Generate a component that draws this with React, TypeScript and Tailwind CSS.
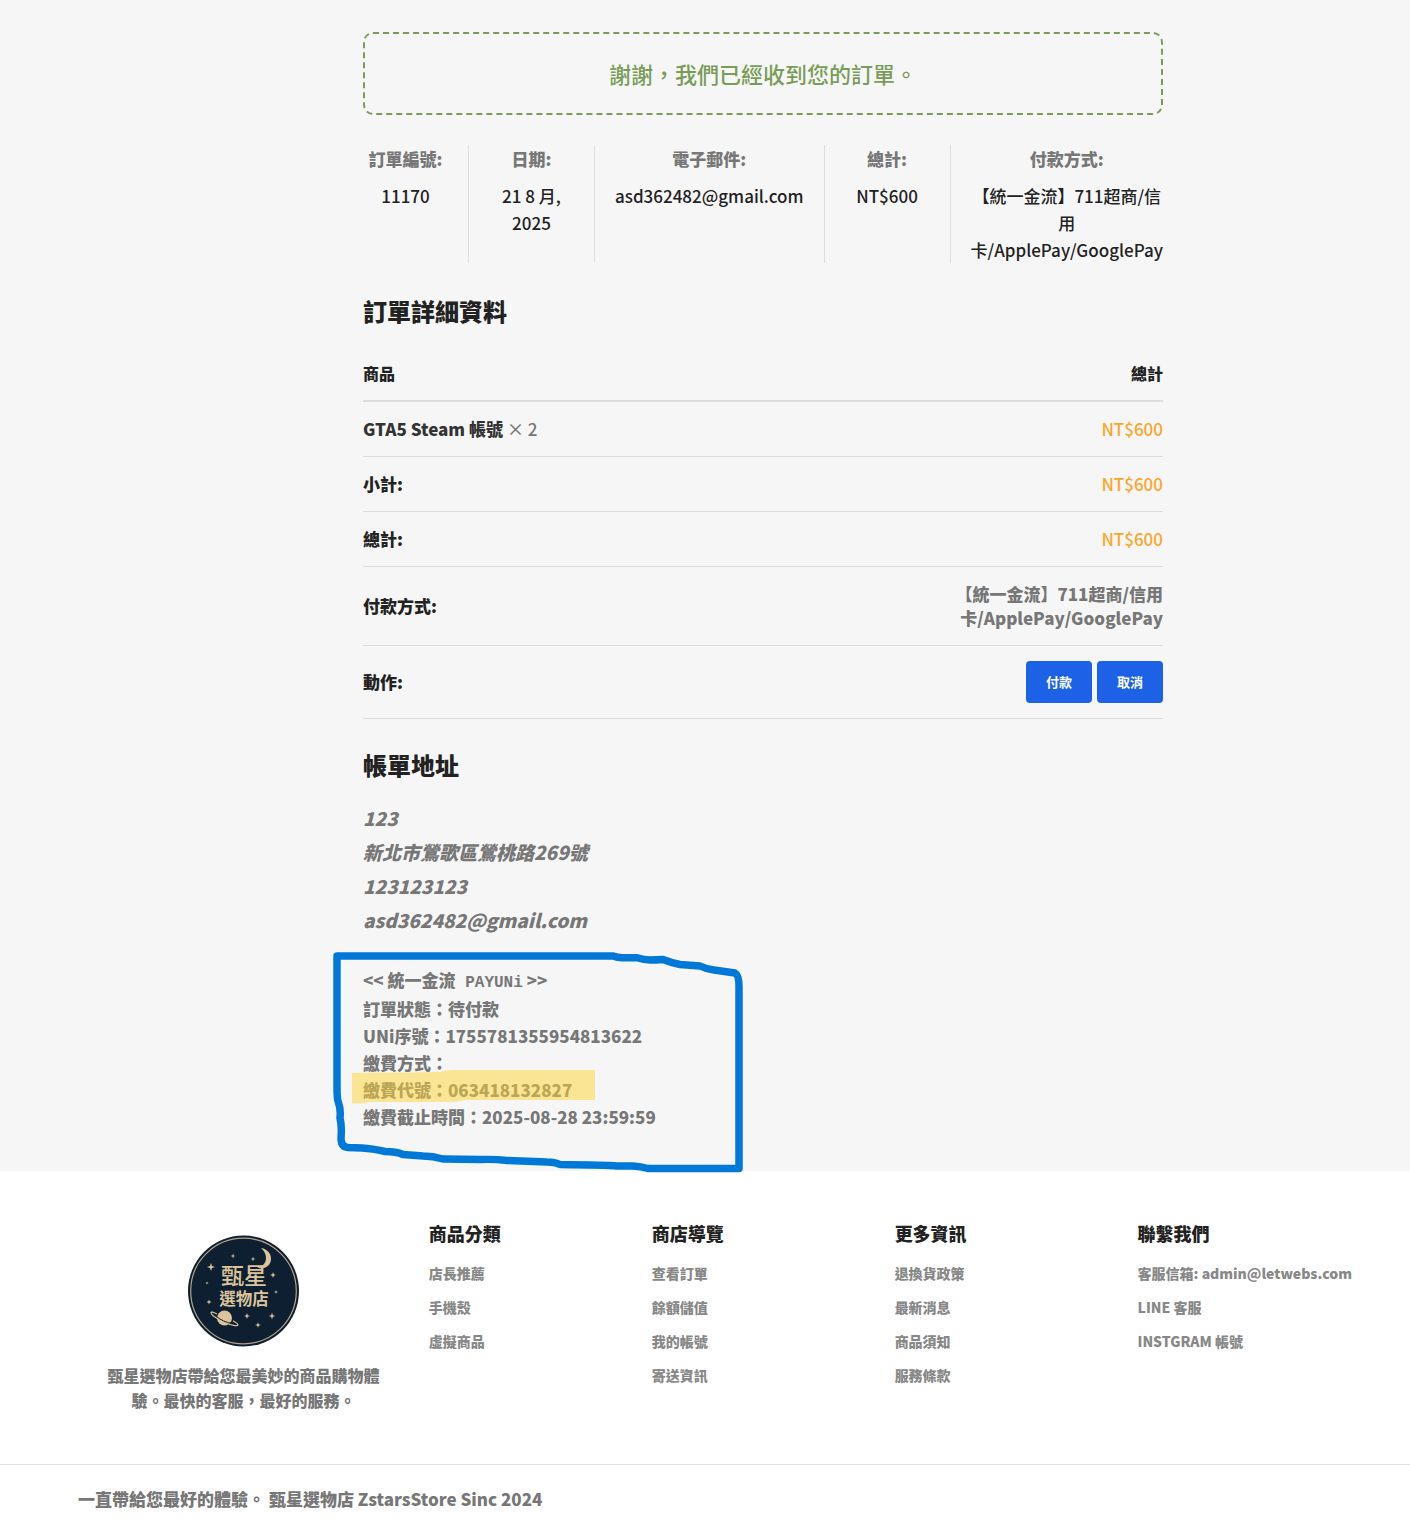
const overview = [
  { label: '訂單編號:', value: '11170' },
  { label: '日期:', value: '21 8 月, 2025' },
  { label: '電子郵件:', value: 'asd362482@gmail.com' },
  { label: '總計:', value: 'NT$600' },
  { label: '付款方式:', value: '【統一金流】711超商/信用卡/ApplePay/GooglePay' },
];

const footerColumns = [
  { title: '商品分類', links: ['店長推薦', '手機殼', '虛擬商品'] },
  { title: '商店導覽', links: ['查看訂單', '餘額儲值', '我的帳號', '寄送資訊'] },
  { title: '更多資訊', links: ['退換貨政策', '最新消息', '商品須知', '服務條款'] },
  { title: '聯繫我們', links: ['客服信箱: admin@letwebs.com', 'LINE 客服', 'INSTGRAM 帳號'] },
];

// four-point sparkles around the logo lettering: x, y, radius
const sparkles = [
  [31, 41, 4],
  [53, 30, 2.4],
  [73, 33, 2.4],
  [93, 49, 3],
  [27, 57, 1.6],
  [96, 66, 2],
  [29, 76, 2.6],
  [67, 90, 3],
  [92, 90, 3.4],
  [78, 99, 2.8],
];

function Logo() {
  return (
    <svg viewBox="7 9 112 112" className="block size-[112px]" role="img" aria-label="甄星選物店">
      <circle cx="63.5" cy="65" r="55.5" fill="#0d1f30" />
      <circle cx="63.5" cy="65" r="52.8" fill="none" stroke="#b5a283" strokeWidth="1.2" />
      <g fill="#dcc39c">
        <path d="M81 22c6.500 1 10.500 6 10 11.500-.5 5.500-4.900 9-10.500 8.800-1.500 0-2.500-.3-3.500-.8 5.500-.5 8.800-4.500 9-9 .2-4-1.800-8-5-10.500z" />
        {sparkles.map(([x, y, r]) => (
          <path
            key={`${x}-${y}`}
            d={`M${x} ${y - r}L${x + r / 4} ${y - r / 4}L${x + r} ${y}L${x + r / 4} ${y + r / 4}L${x} ${y + r}L${x - r / 4} ${y + r / 4}L${x - r} ${y}L${x - r / 4} ${y - r / 4}Z`}
          />
        ))}
        <circle cx="44.5" cy="92" r="7.500" />
      </g>
      <path d="M37 88c-4-2-6-2.500-6-1.300 0 2 6 6 13 9.300s14 4.600 14 2.800c0-.9-2-2.300-5-4" fill="none" stroke="#dcc39c" strokeWidth="1.200" />
      <path d="M36.500 90.500c4 3.500 10 6 15 7" fill="none" stroke="#0d1f30" strokeWidth="1" />
      <text x="64" y="58" textAnchor="middle" fontSize="23" fontWeight="500" fill="#dcc39c">甄星</text>
      <text x="64" y="79" textAnchor="middle" fontSize="16.500" fontWeight="700" fill="#dcc39c">選物店</text>
    </svg>
  );
}

function Annotation() {
  return (
    <svg
      viewBox="333 950 412 225"
      className="absolute -top-4 -left-[30px] w-[412px] h-[225px] max-w-none pointer-events-none"
      aria-hidden="true"
    >
      <path
        d="M352 1073L440 1072Q445 1070 455 1070H595V1100H464Q458 1102 445 1102L368 1102Q366 1103.500 352 1103.500Z"
        fill="#fed336"
        fillOpacity="0.510"
      />
      <path
        d="M337 956H613Q618 958 624 957.700L637 957.700Q644 960 650 960T663 959.500Q672 963 680 964.500L700 966Q706 969 714 970L735 973Q739 975 739 987V1168.500H648Q641 1166.500 633 1166L617 1166Q606 1165 560 1164.500Q555 1162 547 1162L507 1160.500Q495 1159 480 1159.500L443 1159Q433 1156 423 1156L403 1154.500Q396 1151.500 385 1151.500Q372 1148.500 362 1148L348 1147.500Q341 1147 341 1138Q342 1126 340 1118Q341 1109 338 1101Q337 1098 337 1087Z"
        fill="none"
        stroke="#0078d7"
        strokeWidth="7.500"
        strokeLinejoin="round"
      />
    </svg>
  );
}

export default function App() {
  return (
    <div className="min-h-screen bg-white font-['Noto_Sans_CJK_TC',sans-serif] text-[17px] leading-[27px] font-black text-[#777777]">
      <main className="bg-[#f6f6f6] pt-8 pb-[41px] pl-[194px] pr-[78px]">
        <div className="max-w-[800px] mx-auto">
          <p className="border-2 border-dashed border-[#7a9c59] rounded-[10px] py-[22px] text-center text-[22px] leading-[35px] font-medium text-[#7a9c59]">
            謝謝，我們已經收到您的訂單。
          </p>

          <ul className="flex mt-[30px] text-center">
            {overview.map(item => (
              <li key={item.label} className="flex-1 px-5 border-r border-[#dddddd] first:pl-0 last:pr-0 last:border-r-0">
                <span className="block mb-2.5">{item.label}</span>
                <strong className="block font-medium text-[#222222]">{item.value}</strong>
              </li>
            ))}
          </ul>

          <section>
            <h2 className="mt-[30px] mb-[17px] text-2xl leading-9 text-[#222222]">訂單詳細資料</h2>
            <table className="w-full border-separate border-spacing-0 leading-6 [&_th]:font-black [&_th]:text-left [&_th]:text-[#222222] [&_td]:text-right [&_th]:py-[15px] [&_td]:py-[15px] [&_tbody_th]:border-b [&_tbody_td]:border-b [&_th]:border-[#dddddd] [&_td]:border-[#dddddd]">
              <thead className="text-base leading-6">
                <tr>
                  <th scope="col" className="border-b-2">商品</th>
                  <th scope="col" className="border-b-2 w-[210px]">
                    <span className="block text-right">總計</span>
                  </th>
                </tr>
              </thead>
              <tbody>
                <tr>
                  <th scope="row">
                    <a href="#product" className="text-[#333333]">GTA5 Steam 帳號</a>{' '}
                    <span className="font-medium text-[#777777]">× 2</span>
                  </th>
                  <td className="font-medium text-[#f9a72b]">NT$600</td>
                </tr>
                <tr>
                  <th scope="row">小計:</th>
                  <td className="font-medium text-[#f9a72b]">NT$600</td>
                </tr>
                <tr>
                  <th scope="row">總計:</th>
                  <td className="font-medium text-[#f9a72b]">NT$600</td>
                </tr>
                <tr>
                  <th scope="row">付款方式:</th>
                  <td>【統一金流】711超商/信用卡/ApplePay/GooglePay</td>
                </tr>
                <tr>
                  <th scope="row">動作:</th>
                  <td>
                    <div className="flex justify-end gap-[5px] text-[13px] text-white">
                      <button type="button" className="h-[42px] px-5 rounded font-bold bg-[#1d61e7]">付款</button>
                      <button type="button" className="h-[42px] px-5 rounded font-bold bg-[#1d61e7]">取消</button>
                    </div>
                  </td>
                </tr>
              </tbody>
            </table>
          </section>

          <section>
            <h2 className="mt-7 mb-[18px] text-2xl leading-9 text-[#222222]">帳單地址</h2>
            <address className="text-[19px] leading-[34px] italic">
              <p>123</p>
              <p>新北市鶯歌區鶯桃路269號</p>
              <p>123123123</p>
              <p>asd362482@gmail.com</p>
            </address>
          </section>

          <section className="relative mt-[29px]">
            <p className="mb-0.5">
              &lt;&lt; 統一金流
              <code className="font-['Liberation_Mono',monospace] text-base leading-none font-bold whitespace-pre"> PAYUNi</code> &gt;&gt;
            </p>
            <p>訂單狀態：待付款</p>
            <p>UNi序號：1755781355954813622</p>
            <p>繳費方式：</p>
            <p>繳費代號：063418132827</p>
            <p>繳費截止時間：2025-08-28 23:59:59</p>
            <Annotation />
          </section>
        </div>
      </main>

      <footer>
        <div className="mx-[58px] pt-[49px] pb-[51px] grid grid-cols-[371fr_223fr_243fr_243fr_214fr]">
          <div className="flex flex-col items-center px-12 pt-[15px] text-center text-base leading-[25px]">
            <Logo />
            <p className="mt-4">甄星選物店帶給您最美妙的商品購物體驗。最快的客服，最好的服務。</p>
          </div>
          {footerColumns.map(column => (
            <nav key={column.title} aria-label={column.title}>
              <h3 className="text-lg leading-[27px] text-[#222222]">{column.title}</h3>
              <ul className="mt-[15px] flex flex-col gap-3 text-sm leading-[22px] text-[#888888]">
                {column.links.map(link => (
                  <li key={link}>
                    <a href="#footer" className="whitespace-nowrap">{link}</a>
                  </li>
                ))}
              </ul>
            </nav>
          ))}
        </div>
        <div className="border-t border-[#e1e1e1] px-[78px] py-5">
          <p>一直帶給您最好的體驗。 甄星選物店 ZstarsStore Sinc 2024</p>
        </div>
      </footer>
    </div>
  );
}
